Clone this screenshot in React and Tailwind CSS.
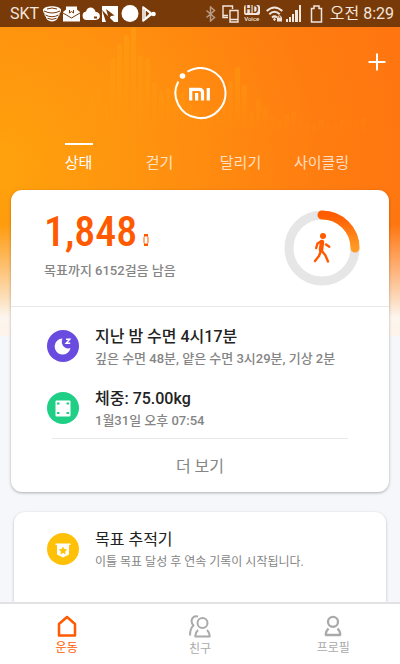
import React from "react";

const BARS = [
  [40, 110], [47, 108], [54, 110], [61, 117], [68, 117], [75, 113], [82, 112], [89, 96], [96, 88], [103, 102],
  [110, 58], [117, 44], [124, 35], [131, 27], [138, 56], [145, 58], [152, 82], [159, 91], [166, 88],
  [173, 84], [180, 92], [187, 104], [194, 112], [201, 118], [208, 114], [215, 106], [221, 98], [228, 81],
  [235, 67], [242, 85], [249, 111], [256, 100], [263, 108], [270, 117], [277, 120], [284, 114], [291, 111],
  [298, 121], [305, 124], [312, 124], [319, 119], [326, 123], [333, 124], [340, 119], [347, 125], [354, 122], [361, 118],
];

function StatusBar() {
  return (
    <div className="flex h-[27px] shrink-0 items-center justify-between bg-[#783a09] pl-[10px] pr-[6px] text-[#f3e6dc]">
      <div className="flex items-center gap-[2px]">
        <span className="mr-[2px] text-base leading-5">SKT</span>
        <svg width="18" height="18" viewBox="0 0 18 18" fill="white">
          <path d="M0 4.500C2 0 16 0 18 4.500c0 2-.5 3-1.500 4 .3 1.500-.3 2.500-1.500 3.500 0 1.500-1 2.500-2.500 3.500q-3.500 2-7 0C4 14.500 3 13.500 3 12c-1.200-1-1.800-2-1.500-3.500C.5 7.500 0 6.500 0 4.500z" />
          <path d="M1 6q8 4 16 0M2.500 10q6.500 3.500 13 0M4.500 13.300q4.500 2.200 9 0" fill="none" stroke="#783a09" strokeWidth="1" />
          <path d="M4 4q5-2 10 0" fill="none" stroke="#783a09" />
        </svg>
        <svg width="17" height="18" viewBox="0 0 17 18" fill="white">
          <path d="M0 7l3-2.500V1.500h11v3L17 7v9.500H0z" />
          <path d="M0 8l8.500 5L17 8" fill="none" stroke="#783a09" />
          <path d="M6.500 5v3l2-1.500 2 1.500V5" fill="none" stroke="#783a09" />
        </svg>
        <svg width="18" height="18" viewBox="0 0 18 18" fill="white">
          <path d="M4.500 15a4.300 4.300 0 0 1-.4-8.500C5 1 12.500 1 13.600 7c5.500 0 5.900 8 0 8z" />
          <path d="M12 11.500h3v2h-3z" fill="#783a09" />
        </svg>
        <svg width="17" height="18" viewBox="0 0 17 18">
          <path d="M0 1h16v16h-4L0 5z" fill="white" />
          <path d="M4 4l8.500 6.500-3.500.5-2 3z" fill="#783a09" />
          <path d="M0 5v12h4z" fill="white" />
        </svg>
        <svg width="18" height="18" viewBox="0 0 18 18"><circle cx="9" cy="8.500" r="8.500" fill="white" /></svg>
        <svg width="17" height="18" viewBox="0 0 17 18" fill="none" stroke="white" strokeWidth="1.600" strokeLinejoin="round">
          <path d="M2 2v14L10 8zM2 2l9 8M2 16l9-7M4 4v10" />
          <circle cx="12.500" cy="9" r="2.300" fill="white" stroke="none" />
        </svg>
      </div>
      <div className="flex items-center">
        <svg className="mr-[6px]" width="11" height="16" viewBox="0 0 11 16" fill="none" stroke="#b99b85" strokeWidth="1.500">
          <path d="M1.500 4.500l8 7-4 3.500V1l4 3.500-8 7" />
        </svg>
        <svg className="mr-[5px]" width="17" height="18" viewBox="0 0 17 18" fill="none" stroke="#f3e6dc" strokeWidth="1.400">
          <path d="M6 12.500H1V1h9.500v3M1 10.500h5M8 5.500h8V17H8zM8 14.500h8" />
        </svg>
        <div className="mr-[6px] flex w-4 flex-col items-center">
          <span className="w-4 rounded-[2px] bg-[#f3e6dc] text-center text-[10px] font-bold leading-[10px] text-[#783a09]">HD</span>
          <span className="text-[6px] font-medium leading-[7px]">Voice</span>
        </div>
        <svg className="mr-[3px]" width="17" height="16" viewBox="0 0 17 16" fill="none" stroke="#f3e6dc" strokeWidth="2">
          <path d="M.700 5Q8.500-2 16.300 5M3.300 8.300Q8.500 3.300 13.700 8.300M6 11.500q2.500-2.200 5 0" />
          <path d="M8.500 11.500l1.500 2-1.500 1.500L7 13.500zM11 11.500h5v4h-5z" fill="#f3e6dc" stroke="none" />
          <path d="M12 12v-1.500q1.500-1.500 3 0V12" strokeWidth="1" />
        </svg>
        <svg className="mr-[9px]" width="15" height="17" viewBox="0 0 15 17" fill="#f3e6dc">
          <path d="M0 14h2v3H0zM3 12h2v5H3zM6 9h2v8H6zM9 5h3v12H9zM13 0h2v17h-2z" />
        </svg>
        <svg className="mr-[7px]" width="13" height="18" viewBox="0 0 13 18" fill="none" stroke="#f3e6dc" strokeWidth="1.500">
          <path d="M1.500 3.500h2.500V1h5v2.500h2.500V17h-10z" />
        </svg>
        <span className="text-base leading-5">오전 8:29</span>
      </div>
    </div>
  );
}

function Backdrop() {
  return (
    <div className="absolute inset-x-0 top-0 h-[309px] bg-[radial-gradient(circle_at_0%_45%,#ffa20c_0%,#ff920f_35%,#ff7c10_75%,#ff7410_100%)]">
      <svg className="absolute left-1/2 -ml-[200px] -mt-[27px]" width="400" height="140" viewBox="0 0 400 140">
        <defs>
          <linearGradient id="wave" gradientUnits="userSpaceOnUse" x1="0" y1="27" x2="0" y2="134">
            <stop offset="0" stopColor="#ffa410" stopOpacity="0.450" />
            <stop offset="0.600" stopColor="#ff9c10" stopOpacity="0.350" />
            <stop offset="1" stopColor="#ff9a10" stopOpacity="0" />
          </linearGradient>
        </defs>
        {BARS.map(([x, y]) => (
          <rect key={x} x={x} y={y} width="5" height={134 - y} rx="2" fill="url(#wave)" />
        ))}
      </svg>
      <div className="absolute inset-0 bg-[linear-gradient(to_bottom,transparent_64%,#fbf3e8cc_88%,#fcf6ee_94%,#fdf3ea_100%)]" />
    </div>
  );
}

function Header() {
  return (
    <header className="relative">
      <button aria-label="추가" className="absolute right-[14px] top-[26px] text-white">
        <svg width="18" height="18" viewBox="0 0 18 18" stroke="currentColor" strokeWidth="2"><path d="M9 .500v17M.500 9h17" /></svg>
      </button>
      <div className="flex justify-center pt-10">
        <svg width="54" height="54" viewBox="0 0 54 54" fill="none" stroke="white">
          <path d="M14.500 4.700A25 25 0 1 1 5.300 14.500" strokeWidth="2" />
          <circle cx="9.500" cy="9" r="2.800" fill="white" stroke="none" />
          <path d="M17.700 33.500V22.300h8.500q3.300 0 3.300 3.300v7.900M23.600 26v7.500M35.300 21v12.500" strokeWidth="3.200" />
        </svg>
      </div>
      <nav className="mx-auto grid w-[81%] grid-cols-4 pt-[22px] text-[15px] leading-5 text-white/75">
        <button className="flex flex-col items-center gap-2 whitespace-nowrap text-white">
          <span className="h-[2px] w-7 bg-white" />상태
        </button>
        <button className="flex flex-col items-center gap-2 whitespace-nowrap"><span className="h-[2px]" />걷기</button>
        <button className="flex flex-col items-center gap-2 whitespace-nowrap"><span className="h-[2px]" />달리기</button>
        <button className="flex flex-col items-center gap-2 whitespace-nowrap"><span className="h-[2px]" />사이클링</button>
      </nav>
    </header>
  );
}

function ProgressRing() {
  return (
    <svg width="76" height="76" viewBox="0 0 76 76" fill="none" strokeLinecap="round">
      <defs>
        <linearGradient id="ring" x1="0" y1="0" x2="0" y2="1">
          <stop offset="0" stopColor="#ff5c00" />
          <stop offset="1" stopColor="#ff9a26" />
        </linearGradient>
      </defs>
      <circle cx="38" cy="38" r="33" stroke="#e6e6e6" strokeWidth="9" />
      <path d="M38 5a33 33 0 0 1 33 33" stroke="url(#ring)" strokeWidth="9" />
      <circle cx="39" cy="26" r="3" fill="#ff5a00" />
      <path d="M38 32l-1 8" stroke="#ff5a00" strokeWidth="4.500" />
      <path d="M37.500 31l-4 2.500-1.300 4.500M42 34.500l3.300 2.200M36.500 42l-1.500 4-4 5M38 41l3.500 4.500 2.500 6" stroke="#ff5a00" strokeWidth="2.400" />
    </svg>
  );
}

function Row({ icon, title, detail, medium }) {
  return (
    <div className="flex items-center gap-4">
      {icon}
      <div className="min-w-0 pt-[2px]">
        <p className={medium ? "text-base font-medium leading-6 text-[#222]" : "text-base leading-6 text-[#222]"}>{title}</p>
        <p className={medium ? "text-[13px] font-medium leading-5 text-[#858585]" : "text-[12px] leading-5 text-[#858585]"}>{detail}</p>
      </div>
    </div>
  );
}

const sleepIcon = (
  <svg className="shrink-0" width="32" height="32" viewBox="0 0 32 32">
    <circle cx="16" cy="16" r="16" fill="#6a4bdf" />
    <path d="M15.500 8.500a8 8 0 1 0 8 9.500c-6 2-10.500-4-8-9.500z" fill="white" />
    <path d="M19 9.300h3.700l-3.500 3.900h4" fill="none" stroke="white" strokeWidth="1.500" />
  </svg>
);

const weightIcon = (
  <svg className="shrink-0" width="32" height="32" viewBox="0 0 32 32">
    <circle cx="16" cy="16" r="16" fill="#20cf86" />
    <rect x="8.500" y="8.500" width="15" height="16" rx="1" fill="white" />
    <path d="M10 10.500h2.500v2H10zM19.500 10.500H22v2h-2.500zM10 20h2.500v2H10zM19.500 20H22v2h-2.500z" fill="#20cf86" />
  </svg>
);

const goalIcon = (
  <svg className="shrink-0" width="32" height="32" viewBox="0 0 32 32">
    <circle cx="16" cy="16" r="16" fill="#ffc107" />
    <path d="M8.500 10.500h15V12H22v9.500L16 24.500l-6-3V12H8.500z" fill="white" />
    <path d="M16 13.500l1.300 2.600 2.900.4-2.100 2 .5 2.900-2.600-1.400-2.600 1.400.5-2.900-2.100-2 2.900-.4z" fill="#ffc107" />
  </svg>
);

function SummaryCard() {
  return (
    <section className="mx-[11px] mt-[17px] rounded-[11px] bg-white shadow-[0_1px_3px_rgba(0,0,0,0.3)]">
      <div className="flex items-center justify-between border-b border-[#e8e8e8] py-[19px] pl-[33px] pr-[29px]">
        <div className="pb-[6px]">
          <div className="flex items-baseline gap-[6px] text-[#ff5a00]">
            <span className="font-['Roboto_Condensed','Liberation_Sans_Narrow','Noto_Sans_CJK_KR',sans-serif] text-[42px] font-medium leading-[46px]">1,848</span>
            <svg width="6" height="12" viewBox="0 0 6 12" fill="none" stroke="currentColor">
              <path d="M1 1h4M1 11h4" strokeWidth="2" />
              <rect x="1" y="2" width="4" height="8" rx="1.500" />
            </svg>
          </div>
          <p className="mt-[6px] text-[13px] font-medium leading-5 text-[#858585]">목표까지 6152걸음 남음</p>
        </div>
        <ProgressRing />
      </div>
      <div className="flex flex-col gap-4 px-9 pt-4">
        <Row medium icon={sleepIcon} title="지난 밤 수면 4시17분" detail="깊은 수면 48분, 얕은 수면 3시29분, 기상 2분" />
        <Row medium icon={weightIcon} title="체중: 75.00kg" detail="1월31일 오후 07:54" />
      </div>
      <div className="mx-[41px] mt-[7px] border-t border-[#e8e8e8]">
        <button className="block w-full pb-[13px] pt-4 text-base leading-6 text-[#858585]">더 보기</button>
      </div>
    </section>
  );
}

function TabBar() {
  return (
    <nav className="relative grid shrink-0 grid-cols-3 border-t-2 border-[#e2e2e2] bg-white pb-[6px] pt-[11px] text-[12px] leading-[18px] text-[#aaa]">
      <button className="flex flex-col items-center gap-[2px] text-[#ff5a00]">
        <svg width="22" height="22" viewBox="0 0 22 22" fill="none" stroke="currentColor" strokeWidth="2.500" strokeLinejoin="round"><path d="M3 9l8-7 8 7v11.500H3z" /></svg>
        운동
      </button>
      <button className="flex flex-col items-center gap-[2px]">
        <svg width="24" height="23" viewBox="0 0 24 23" fill="none" stroke="currentColor" strokeWidth="2">
          <circle cx="14.500" cy="8" r="5" />
          <path d="M10 15q-3 3-2.700 6.500h14.400Q22 18 19 15M10 1.500C3.500 0 2 7 5.500 10.500c-2.500 2-3.500 5-3.500 10" strokeLinejoin="round" />
        </svg>
        친구
      </button>
      <button className="flex flex-col items-center gap-[2px]">
        <svg width="22" height="22" viewBox="0 0 22 22" fill="none" stroke="currentColor" strokeWidth="2.300">
          <circle cx="11" cy="6.800" r="5" />
          <path d="M6.500 13.500q-3 3-2.700 6.500h14.400q.3-3.500-2.700-6.500" strokeLinejoin="round" />
        </svg>
        프로필
      </button>
    </nav>
  );
}

export default function App() {
  return (
    <div className="flex h-screen flex-col overflow-hidden bg-[#f5f7fa] font-['Roboto','Noto_Sans_CJK_KR',sans-serif]">
      <StatusBar />
      <main className="relative min-h-0 flex-1 overflow-hidden">
        <Backdrop />
        <div className="relative">
          <Header />
          <SummaryCard />
          <section className="mx-[14px] mt-5 rounded-[11px] bg-white px-[33px] pb-16 pt-[14px] shadow-[0_1px_3px_rgba(0,0,0,0.25)]">
            <Row icon={goalIcon} title="목표 추적기" detail="이틀 목표 달성 후 연속 기록이 시작됩니다." />
          </section>
        </div>
      </main>
      <TabBar />
    </div>
  );
}
